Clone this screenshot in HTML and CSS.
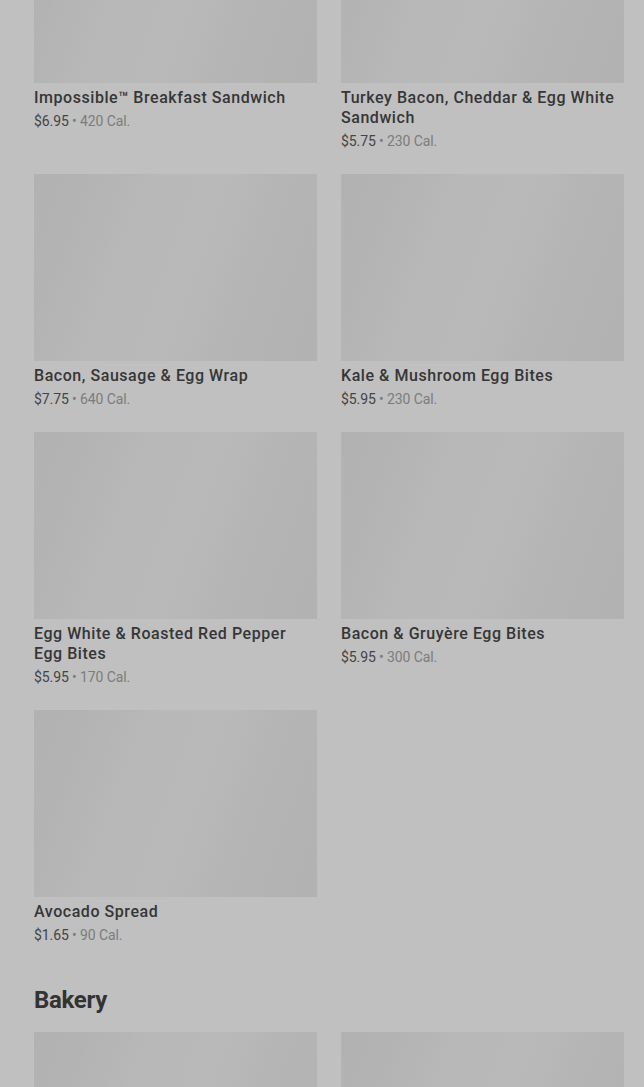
FILE: index.html
```html
<!DOCTYPE html>
<html lang="en">
<head>
<meta charset="utf-8">
<title>Menu</title>
<link rel="stylesheet" href="styles.css">
</head>
<body>
<main class="menu">
  <section class="grid first">
    <div class="card"><div class="thumb"></div><div class="name">Impossible™ Breakfast Sandwich</div><div class="meta"><span class="price">$6.95</span> • 420 Cal.</div></div>
    <div class="card"><div class="thumb"></div><div class="name">Turkey Bacon, Cheddar &amp; Egg White Sandwich</div><div class="meta"><span class="price">$5.75</span> • 230 Cal.</div></div>
    <div class="card"><div class="thumb"></div><div class="name">Bacon, Sausage &amp; Egg Wrap</div><div class="meta"><span class="price">$7.75</span> • 640 Cal.</div></div>
    <div class="card"><div class="thumb"></div><div class="name">Kale &amp; Mushroom Egg Bites</div><div class="meta"><span class="price">$5.95</span> • 230 Cal.</div></div>
    <div class="card"><div class="thumb"></div><div class="name">Egg White &amp; Roasted Red Pepper Egg Bites</div><div class="meta"><span class="price">$5.95</span> • 170 Cal.</div></div>
    <div class="card"><div class="thumb"></div><div class="name">Bacon &amp; Gruyère Egg Bites</div><div class="meta"><span class="price">$5.95</span> • 300 Cal.</div></div>
    <div class="card"><div class="thumb"></div><div class="name">Avocado Spread</div><div class="meta"><span class="price">$1.65</span> • 90 Cal.</div></div>
  </section>
  <h2 class="section-title">Bakery</h2>
  <section class="grid">
    <div class="card"><div class="thumb"></div></div>
    <div class="card"><div class="thumb"></div></div>
  </section>
</main>
</body>
</html>
```
FILE: styles.css
```css
html, body {
  margin: 0;
  padding: 0;
  background: #c0c0c0;
  overflow: hidden;
}
body {
  font-family: Roboto, "Liberation Sans", sans-serif;
  color: #333;
}
.menu {
  padding: 0 20px 0 34px;
}
.grid {
  display: grid;
  grid-template-columns: 1fr 1fr;
  column-gap: 24px;
  row-gap: 24px;
}
.grid.first {
  margin-top: -104px;
}
.card {
  min-width: 0;
}
.thumb {
  height: 187px;
  background: linear-gradient(110deg, #b2b2b2 0%, #b3b3b3 15%, #b8b8b8 35%, #b9b9b9 55%, #b4b4b4 75%, #b2b2b2 100%);
}
.name {
  margin-top: 5px;
  font-size: 16px;
  line-height: 20px;
  font-weight: 500;
  letter-spacing: 0.55px;
  color: #363636;
}
.meta {
  margin-top: 4px;
  font-size: 14px;
  line-height: 18px;
  letter-spacing: -0.1px;
  color: #7c7c7c;
}
.price {
  color: #444;
}
.section-title {
  margin: 40px 0 16px;
  font-size: 24px;
  line-height: 32px;
  font-weight: 700;
  color: #333;
  letter-spacing: -0.3px;
}
```
